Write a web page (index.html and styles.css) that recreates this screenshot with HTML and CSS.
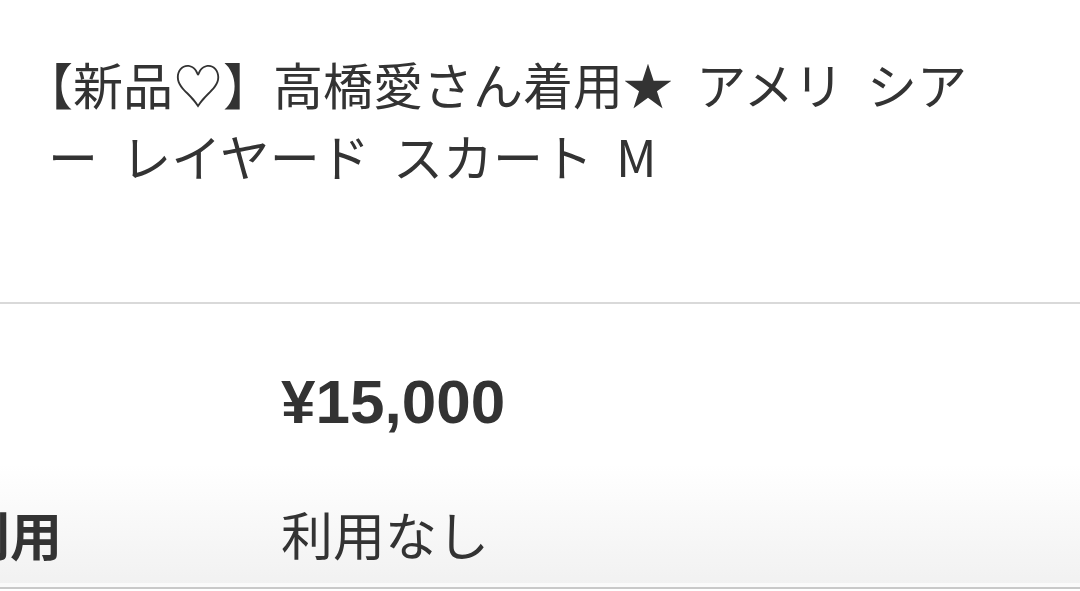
FILE: index.html
```html
<!DOCTYPE html>
<html lang="ja">

<head>
    <meta charset="UTF-8">
    <title>【新品♡】高橋愛さん着用★ アメリ シアー レイヤード スカート M</title>
    <meta name="viewport" content="width=device-width, initial-scale=1.0">
    <link rel="stylesheet" href="styles.css">
</head>

<body>

    <header class="item-head">
        <h1 class="item-title">【新品♡】高橋愛さん着用★ アメリ シアー レイヤード スカート M</h1>
    </header>

    <section class="item-detail">
        <div class="detail-row price-row">
            <div class="detail-label">販売価格</div>
            <div class="detail-value price">¥15,000</div>
        </div>
        <div class="detail-row">
            <div class="detail-label">ポイント利用</div>
            <div class="detail-value">利用なし</div>
        </div>
    </section>

</body>

</html>
```

FILE: styles.css
```css
body {
    font-family: "Noto Sans CJK JP", "Noto Sans", sans-serif;
    background-color: #fff;
    color: #333;
    margin: 0;
    padding: 0;
    overflow: hidden;
}

.item-head {
    padding: 47px 90px 111px 48px;
    border-bottom: 2px solid #d9d9d9;
}

.item-title {
    margin: 0;
    font-size: 50px;
    font-weight: 400;
    line-height: 72px;
    word-spacing: 12px;
    line-break: loose;
    text-spacing-trim: trim-start;
}

/* 詳細テーブル */
.item-detail {
    margin-left: -250px;
    padding-top: 62px;
    height: 221px;
    background: linear-gradient(to bottom, #fff 0, #fff 160px, #f1f1f1 100%);
    border-bottom: 2px solid #c9c9c9;
    box-shadow: inset 0 -4px 0 #fafafa;
}

.detail-row {
    display: grid;
    grid-template-columns: 531px 1fr;
    align-items: center;
}

.price-row {
    margin-bottom: 60px;
}

.detail-label {
    font-size: 52px;
    font-weight: 700;
    line-height: 72px;
}

.detail-value {
    font-size: 52px;
    line-height: 72px;
}

.price {
    font-family: "Liberation Sans", Arial, sans-serif;
    font-size: 62px;
    font-weight: 700;
    line-height: 60px;
}
```
